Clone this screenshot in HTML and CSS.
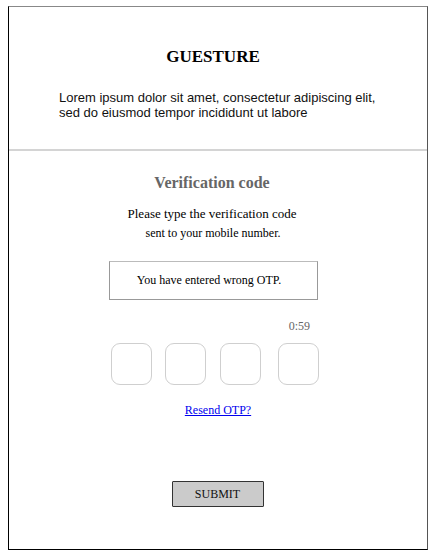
FILE: index.html
```html
<!DOCTYPE html>
<html>
<head>
<meta charset="utf-8">
<link rel="stylesheet" href="styles.css">
</head>
<body>
<div class="frame">
  <header class="header">
    <h1 class="brand">GUESTURE</h1>
    <p class="intro">Lorem ipsum dolor sit amet, consectetur adipiscing elit,<br>sed do eiusmod tempor incididunt ut labore</p>
  </header>
  <main class="verify">
    <h2 class="verify-title">Verification code</h2>
    <p class="verify-lead">Please type the verification code</p>
    <p class="verify-sub">sent to your mobile number.</p>
    <div class="alert">You have entered wrong OTP.</div>
    <div class="otp-wrap">
      <div class="timer">0:59</div>
      <div class="otp-row">
        <div class="otp-box"></div>
        <div class="otp-box"></div>
        <div class="otp-box otp-third"></div>
        <div class="otp-box otp-last"></div>
      </div>
    </div>
    <a class="resend" href="#">Resend OTP?</a>
    <button class="submit" type="button">SUBMIT</button>
  </main>
</div>
</body>
</html>
```

FILE: styles.css
```css
html, body {
  margin: 0;
  padding: 0;
  background: #fff;
}
body {
  font-family: "Liberation Serif", "Times New Roman", serif;
  color: #000;
}
.frame {
  margin: 6px 0 0 8px;
  width: 418px;
  height: 542px;
  border: 1px solid #000;
  border-top-color: #888;
  border-right-color: #555;
  display: flex;
  flex-direction: column;
}
.header {
  height: 142px;
  padding-right: 10px;
  border-bottom: 2px solid #d4d4d4;
  display: flex;
  flex-direction: column;
  align-items: center;
}
.brand {
  margin: 40px 0 0;
  font-size: 17px;
  line-height: 20px;
  font-weight: bold;
}
.intro {
  align-self: flex-start;
  margin: 23px 0 0 50px;
  font-family: "Liberation Sans", Arial, sans-serif;
  font-size: 13px;
  line-height: 15px;
  color: #111;
}
.verify {
  flex: 1;
  padding-right: 12px;
  display: flex;
  flex-direction: column;
  align-items: center;
}
.verify-title {
  margin: 22px 0 0;
  font-size: 16px;
  line-height: 19px;
  font-weight: bold;
  color: #666;
}
.verify-lead {
  margin: 14px 0 0;
  font-size: 13px;
  line-height: 16px;
}
.verify-sub {
  margin: 4px 0 0 2px;
  font-size: 12px;
  line-height: 15px;
}
.alert {
  margin: 20px 0 0 2px;
  width: 207px;
  height: 37px;
  border: 1px solid #999;
  border-top-color: #bbb;
  display: flex;
  align-items: center;
  justify-content: center;
  font-size: 12px;
  text-indent: -8px;
}
.otp-wrap {
  margin: 19px 0 0 6px;
  width: 208px;
  display: flex;
  flex-direction: column;
}
.timer {
  align-self: flex-end;
  margin-right: 9px;
  font-size: 12px;
  line-height: 14px;
  color: #666;
}
.otp-row {
  margin-top: 10px;
  display: flex;
  gap: 13px;
}
.otp-box {
  width: 39px;
  height: 40px;
  border: 1.5px solid #cfcfcf;
  border-radius: 9px;
}
.otp-third {
  margin-left: 1px;
}
.otp-last {
  margin-left: 4px;
}
.resend {
  margin: 18px 0 0 12px;
  font-size: 12px;
  line-height: 14px;
  color: #0000ee;
  text-decoration: underline;
}
.submit {
  margin: 64px 0 0 11px;
  width: 92px;
  height: 26px;
  padding: 0;
  background: #cbcbcb;
  border: 1px solid #333;
  border-radius: 1px;
  font-family: "Liberation Serif", "Times New Roman", serif;
  font-size: 12px;
  color: #111;
}
```
